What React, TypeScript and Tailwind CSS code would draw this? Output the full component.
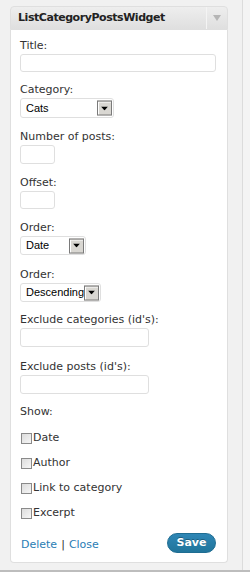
import React from "react";

const font = { fontFamily: '"DejaVu Sans", Verdana, sans-serif' };

function Label({ children }: { children: React.ReactNode }) {
  return <div className="h-[15px] leading-[14px] text-[11px] text-[#333]">{children}</div>;
}

function TextBox({ w, h }: { w: string; h: string }) {
  return <div className={`${w} ${h} bg-white border border-[#dfdfdf] rounded-[3px]`} />;
}

function Arrow() {
  return (
    <div className="w-[15px] h-[15px] bg-[#d9d7d2] border border-[#7a7a7a] flex items-center justify-center shadow-[inset_1px_1px_0_#fff]">
      <svg width="7" height="4" viewBox="0 0 7 4"><path d="M0 0h7L3.5 4z" fill="#000" /></svg>
    </div>
  );
}

function Select({ w, h, text }: { w: string; h: string; text: string }) {
  return (
    <div className={`${w} ${h} bg-white border border-[#dfdfdf] rounded-[3px] flex items-center pl-[5px] pr-[1px] relative`}>
      <span className="text-[11px] text-black flex-1 whitespace-nowrap font-['Liberation_Sans',Arial,sans-serif]">{text}</span>
      <div className="absolute right-[1px] top-1/2 -translate-y-1/2">
        <Arrow />
      </div>
    </div>
  );
}

function Check({ label }: { label: string }) {
  return (
    <div className="h-[25px] flex items-center text-[11px] text-[#333]">
      <div className="w-[11px] h-[11px] border border-[#8a8a8a] bg-gradient-to-br from-[#dcdcdc] to-[#f6f6f6] mr-[1px] shrink-0" />
      <span>{label}</span>
    </div>
  );
}

export default function App() {
  return (
    <div style={font} className="w-[250px] h-[572px] bg-[#f1f1f1] flex flex-col overflow-hidden">
      <div className="h-[570px] flex">
        <div className="w-[242px] pl-[10px] pt-[6px]">
          <div className="w-[218px] h-[557px] flex flex-col">
            <div className="h-[24px] flex border border-[#dfdfdf] rounded-t-[4px] bg-gradient-to-b from-[#eeeeee] to-[#dfdfdf]">
              <div className="flex-1 flex items-center pl-[7px] text-[11px] font-bold text-[#222] tracking-[-0.45px]">
                ListCategoryPostsWidget
              </div>
              <div className="w-[21px] border-l border-[#f4f4f4] flex items-center justify-center">
                <svg width="8" height="6" viewBox="0 0 8 6"><path d="M0 0h8L4 6z" fill="#b5b5b5" /></svg>
              </div>
            </div>
            <div className="flex-1 bg-white border border-t-0 border-[#dfdfdf] rounded-b-[4px] pl-[9px] pr-[11px] pt-[9px] flex flex-col">
              <div className="mb-[11px]">
                <Label>Title:</Label>
                <TextBox w="w-[196px]" h="h-[18px]" />
              </div>
              <div className="mb-[12px]">
                <Label>Category:</Label>
                <Select w="w-[94px]" h="h-[20px]" text="Cats" />
              </div>
              <div className="mb-[12px]">
                <Label>Number of posts:</Label>
                <TextBox w="w-[35px]" h="h-[19px]" />
              </div>
              <div className="mb-[12px]">
                <Label>Offset:</Label>
                <TextBox w="w-[35px]" h="h-[18px]" />
              </div>
              <div className="mb-[13px]">
                <Label>Order:</Label>
                <Select w="w-[66px]" h="h-[19px]" text="Date" />
              </div>
              <div className="mb-[11px]">
                <Label>Order:</Label>
                <Select w="w-[81px]" h="h-[19px]" text="Descending" />
              </div>
              <div className="mb-[13px]">
                <Label>Exclude categories (id's):</Label>
                <TextBox w="w-[129px]" h="h-[19px]" />
              </div>
              <div className="mb-[11px]">
                <Label>Exclude posts (id's):</Label>
                <TextBox w="w-[129px]" h="h-[19px]" />
              </div>
              <Label>Show:</Label>
              <div className="mt-[6px] pl-[1px]">
                <Check label="Date" />
                <Check label="Author" />
                <Check label="Link to category" />
                <Check label="Excerpt" />
              </div>
              <div className="mt-[7px] h-[20px] flex items-center justify-between">
                <div className="text-[11px] text-[#2a7db5] pt-[4px] pl-[1px]">
                  <span>Delete</span>
                  <span className="text-[#333] mx-[4px]">|</span>
                  <span>Close</span>
                </div>
                <div className="w-[49px] h-[20px] rounded-full bg-gradient-to-b from-[#2e86b5] to-[#21759b] border border-[#1f6d92] flex items-center justify-center text-white text-[11px] font-bold [text-shadow:0_-1px_0_rgba(0,0,0,0.3)]">
                  Save
                </div>
              </div>
            </div>
          </div>
        </div>
        <div className="w-[1px] bg-[#dcdcdc]" />
        <div className="flex-1 bg-[#f4f4f4]" />
      </div>
      <div className="h-[2px] bg-[#bdbdbd]" />
    </div>
  );
}
